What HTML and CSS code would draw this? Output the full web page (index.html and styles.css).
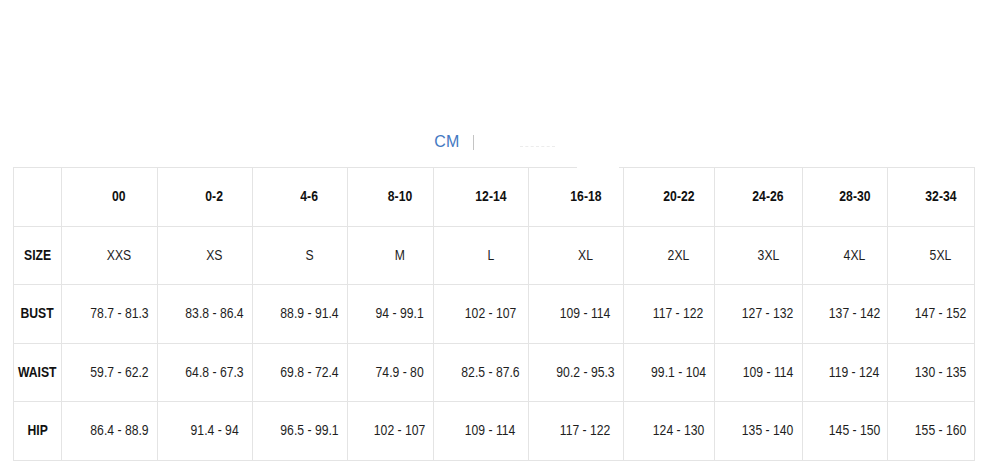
FILE: index.html
```html
<!DOCTYPE html>
<html>
<head>
<meta charset="utf-8">
<link rel="stylesheet" href="styles.css">
</head>
<body>
<div class="page">
  <div class="units">
    <span class="unit active">CM</span>
    <span class="sep"></span>
    <span class="unit faded"></span>
  </div>
  <div class="chart">
    <div class="gap-patch"></div>
    <div class="cell label"></div>
    <div class="cell head"><span class="t">00</span></div>
    <div class="cell head"><span class="t">0-2</span></div>
    <div class="cell head"><span class="t">4-6</span></div>
    <div class="cell head"><span class="t">8-10</span></div>
    <div class="cell head"><span class="t">12-14</span></div>
    <div class="cell head"><span class="t">16-18</span></div>
    <div class="cell head"><span class="t">20-22</span></div>
    <div class="cell head"><span class="t">24-26</span></div>
    <div class="cell head"><span class="t">28-30</span></div>
    <div class="cell head"><span class="t">32-34</span></div>

    <div class="cell label"><span class="t">SIZE</span></div>
    <div class="cell"><span class="t">XXS</span></div>
    <div class="cell"><span class="t">XS</span></div>
    <div class="cell"><span class="t">S</span></div>
    <div class="cell"><span class="t">M</span></div>
    <div class="cell"><span class="t">L</span></div>
    <div class="cell"><span class="t">XL</span></div>
    <div class="cell"><span class="t">2XL</span></div>
    <div class="cell"><span class="t">3XL</span></div>
    <div class="cell"><span class="t">4XL</span></div>
    <div class="cell"><span class="t">5XL</span></div>

    <div class="cell label"><span class="t">BUST</span></div>
    <div class="cell"><span class="t">78.7 - 81.3</span></div>
    <div class="cell"><span class="t">83.8 - 86.4</span></div>
    <div class="cell"><span class="t">88.9 - 91.4</span></div>
    <div class="cell"><span class="t">94 - 99.1</span></div>
    <div class="cell"><span class="t">102 - 107</span></div>
    <div class="cell"><span class="t">109 - 114</span></div>
    <div class="cell"><span class="t">117 - 122</span></div>
    <div class="cell"><span class="t">127 - 132</span></div>
    <div class="cell"><span class="t">137 - 142</span></div>
    <div class="cell"><span class="t">147 - 152</span></div>

    <div class="cell label"><span class="t">WAIST</span></div>
    <div class="cell"><span class="t">59.7 - 62.2</span></div>
    <div class="cell"><span class="t">64.8 - 67.3</span></div>
    <div class="cell"><span class="t">69.8 - 72.4</span></div>
    <div class="cell"><span class="t">74.9 - 80</span></div>
    <div class="cell"><span class="t">82.5 - 87.6</span></div>
    <div class="cell"><span class="t">90.2 - 95.3</span></div>
    <div class="cell"><span class="t">99.1 - 104</span></div>
    <div class="cell"><span class="t">109 - 114</span></div>
    <div class="cell"><span class="t">119 - 124</span></div>
    <div class="cell"><span class="t">130 - 135</span></div>

    <div class="cell label"><span class="t">HIP</span></div>
    <div class="cell"><span class="t">86.4 - 88.9</span></div>
    <div class="cell"><span class="t">91.4 - 94</span></div>
    <div class="cell"><span class="t">96.5 - 99.1</span></div>
    <div class="cell"><span class="t">102 - 107</span></div>
    <div class="cell"><span class="t">109 - 114</span></div>
    <div class="cell"><span class="t">117 - 122</span></div>
    <div class="cell"><span class="t">124 - 130</span></div>
    <div class="cell"><span class="t">135 - 140</span></div>
    <div class="cell"><span class="t">145 - 150</span></div>
    <div class="cell"><span class="t">155 - 160</span></div>
  </div>
</div>
</body>
</html>
```
FILE: styles.css
```css
html, body {
  margin: 0;
  padding: 0;
  background: #fff;
}
.page {
  padding: 132px 13px 0 13px;
  font-family: "Liberation Sans", Arial, sans-serif;
}
.units {
  height: 20px;
  margin-bottom: 15px;
  display: flex;
  align-items: center;
  justify-content: center;
  padding-left: 1px;
}
.unit.active {
  color: #4479c2;
  font-size: 16px;
  letter-spacing: 0.4px;
  line-height: 20px;
}
.sep {
  width: 1px;
  height: 15px;
  background: #c4c4c4;
  margin-left: 13px;
  margin-right: 46px;
}
.unit.faded {
  width: 35px;
  height: 8px;
  border-bottom: 1px dashed #ececec;
}
.chart {
  position: relative;
  display: grid;
  grid-template-columns: 48px 96px 95px 95px 86px 95px 95px 91px 88px 85px 87px;
  grid-template-rows: 59px 58px 59px 58px 59px;
  width: 962px;
  border-top: 1px solid #e4e4e4;
  border-left: 1px solid #e4e4e4;
  box-sizing: border-box;
}
.gap-patch {
  position: absolute;
  left: 563px;
  top: -2px;
  width: 42px;
  height: 3px;
  background: #fff;
}
.cell {
  box-sizing: border-box;
  border-right: 1px solid #e4e4e4;
  border-bottom: 1px solid #e4e4e4;
  display: flex;
  align-items: center;
  justify-content: center;
  padding-left: 19px;
  padding-bottom: 2px;
  font-size: 14px;
  color: #1e1e1e;
  white-space: nowrap;
}
.t {
  display: inline-block;
  transform: scaleX(0.87);
}
.cell.label {
  padding-left: 0;
  font-weight: bold;
  color: #111;
}
.cell.head {
  font-weight: bold;
  color: #111;
}
```
